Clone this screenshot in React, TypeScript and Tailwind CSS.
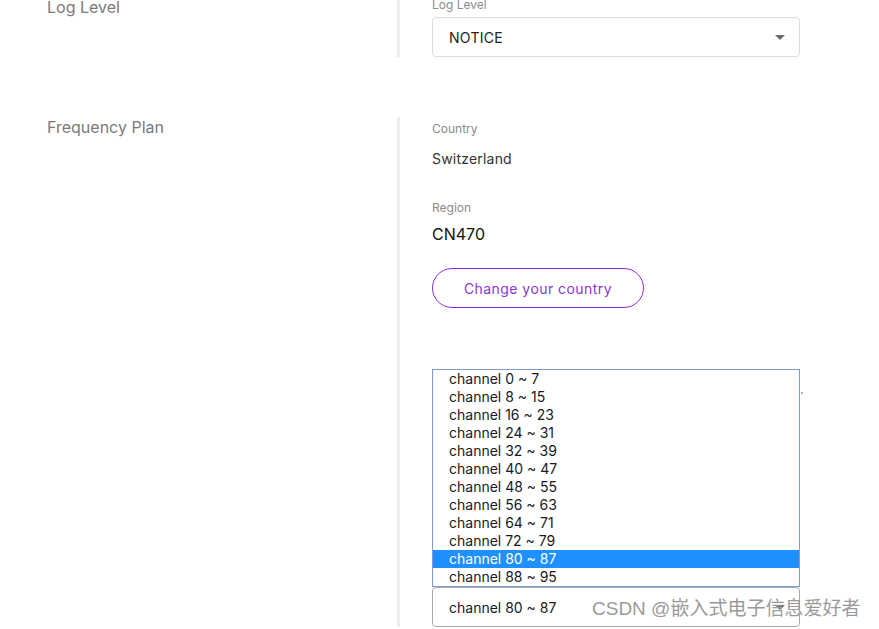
import React from "react"

const channels = [
  "channel 0 ~ 7",
  "channel 8 ~ 15",
  "channel 16 ~ 23",
  "channel 24 ~ 31",
  "channel 32 ~ 39",
  "channel 40 ~ 47",
  "channel 48 ~ 55",
  "channel 56 ~ 63",
  "channel 64 ~ 71",
  "channel 72 ~ 79",
  "channel 80 ~ 87",
  "channel 88 ~ 95",
]

// small caret used by the select boxes
function Caret() {
  return (
    <svg width="10" height="5" viewBox="0 0 10 5" className="shrink-0">
      <path d="M0 0 L10 0 L5 5 Z" fill="#6b6b6b" />
    </svg>
  )
}

function SettingRow({
  title,
  children,
  className = "",
  titleClass = "",
}: {
  title: string
  children: React.ReactNode
  className?: string
  titleClass?: string
}) {
  return (
    <div className={`flex ${className}`}>
      <div className={`w-[397px] shrink-0 pl-[47px] text-[16px] leading-6 text-[#7a7a7a] ${titleClass}`}>{title}</div>
      <div className="border-l-[3px] border-[#eeeeee] pl-8">{children}</div>
    </div>
  )
}

export default function App() {
  const selected = "channel 80 ~ 87"
  return (
    <div className="relative h-[629px] w-[879px] overflow-hidden bg-white font-['Inter',sans-serif]">
      <SettingRow title="Log Level" className="-mt-[4px]" titleClass="-mt-[1px]">
        <div className="pt-[1px]">
          <div className="mb-1 text-[12px] leading-4 text-[#8a8a8a]">Log Level</div>
          <div className="flex h-10 w-[368px] items-center justify-between rounded border border-[#dcdcdc] pl-4 pr-[14px] text-[14px] tracking-[0.3px] text-[#222]">
            <span>NOTICE</span>
            <Caret />
          </div>
        </div>
      </SettingRow>

      <SettingRow title="Frequency Plan" className="mt-[60px]" titleClass="-mt-[2px]">
        <div className="pt-1">
          <div className="text-[12px] leading-4 text-[#8a8a8a]">Country</div>
          <div className="mt-3 text-[14px] leading-5 tracking-[0.2px] text-[#333]">Switzerland</div>
          <div className="mt-[31px] text-[12px] leading-4 text-[#8a8a8a]">Region</div>
          <div className="mt-[6px] text-[16px] leading-6 text-[#111]">CN470</div>
          <button className="mt-[22px] flex h-10 w-[212px] items-center justify-center rounded-full border border-[#8a2bd6] text-[14px] tracking-[0.45px] text-[#8a35d2]">
            Change your country
          </button>

          <div className="mt-[61px] w-[368px] border border-[#7c9bd6] bg-white">
            {channels.map((c) => (
              <div
                key={c}
                className={`h-[18px] pl-4 text-[14px] leading-[18px] ${c === selected ? "bg-[#1e90ff] text-white" : "text-[#1a1a1a]"}`}
              >
                {c}
              </div>
            ))}
          </div>
          <div className="flex h-10 w-[368px] items-center justify-between rounded border border-[#a8a8a8] pl-4 pr-[14px] text-[14px] text-[#1a1a1a]">
            <span>{selected}</span>
            <Caret />
          </div>
        </div>
      </SettingRow>

      <div className="absolute left-[801px] top-[392px] h-[2px] w-[2px] bg-[#b0b0b0]" />

      <div className="pointer-events-none absolute left-[592px] top-[597px] text-[19px] leading-6 text-[#9a9a9a] font-['Liberation_Sans','Noto_Sans_CJK_SC',sans-serif]">
        CSDN @嵌入式电子信息爱好者
      </div>
    </div>
  )
}
